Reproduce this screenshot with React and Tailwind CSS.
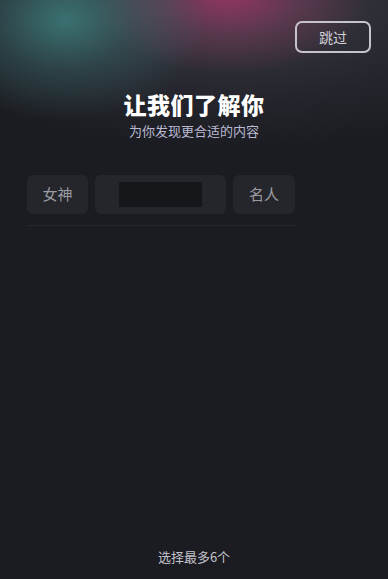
import React from "react";

const chipText = "text-[15px] text-[#9c9ca3]";

export default function App() {
    return (
        <div
            className="relative w-[388px] h-[579px] overflow-hidden flex flex-col bg-[#1b1c21]"
            style={{ fontFamily: '"Noto Sans CJK SC", "Noto Sans", sans-serif' }}
        >
            {/* top colour glow */}
            <div className="pointer-events-none absolute inset-x-0 top-0 h-[220px] bg-[radial-gradient(ellipse_140px_100px_at_65px_20px,rgba(62,130,128,0.8),rgba(62,130,128,0.3)_50%,transparent),radial-gradient(ellipse_140px_80px_at_230px_-5px,rgba(165,50,100,0.8),rgba(150,60,100,0.35)_50%,transparent),radial-gradient(ellipse_360px_150px_at_230px_0px,rgba(90,85,100,0.6),rgba(70,70,85,0.3)_55%,transparent)]" />

            <div className="relative flex justify-end pt-[21px] pr-[17px]">
                <button className="w-[76px] h-[32px] rounded-[7px] border-2 border-[#c4c4ca] text-[14px] text-[#cfcfd5] flex items-center justify-center">
                    跳过
                </button>
            </div>

            <div className="relative flex flex-col items-center mt-[37px]">
                <h1 className="text-[23px] leading-[28px] font-black text-white tracking-[0.5px]">让我们了解你</h1>
                <p className="mt-[5px] text-[13px] leading-[16px] text-[#b9b9d2]">为你发现更合适的内容</p>
            </div>

            <div className="relative mt-[36px] pl-[27px] flex flex-col">
                <div className="flex gap-[7px]">
                    <div className="w-[61px] h-[39px] rounded-[6px] bg-[#25262b] flex items-center justify-center">
                        <span className={chipText}>女神</span>
                    </div>
                    <div className="w-[131px] h-[39px] rounded-[6px] bg-[#25262b] flex items-center justify-center">
                        <div className="w-[83px] h-[25px] bg-[#16171b]" />
                    </div>
                    <div className="w-[62px] h-[39px] rounded-[6px] bg-[#25262b] flex items-center justify-center">
                        <span className={chipText}>名人</span>
                    </div>
                </div>
                <div className="mt-[11px] w-[268px] h-px bg-[#26272c]" />
            </div>

            <div className="relative mt-auto pb-[14px] flex justify-center">
                <span className="text-[13px] leading-[16px] text-[#c3c3cc]">选择最多6个</span>
            </div>
        </div>
    );
}
